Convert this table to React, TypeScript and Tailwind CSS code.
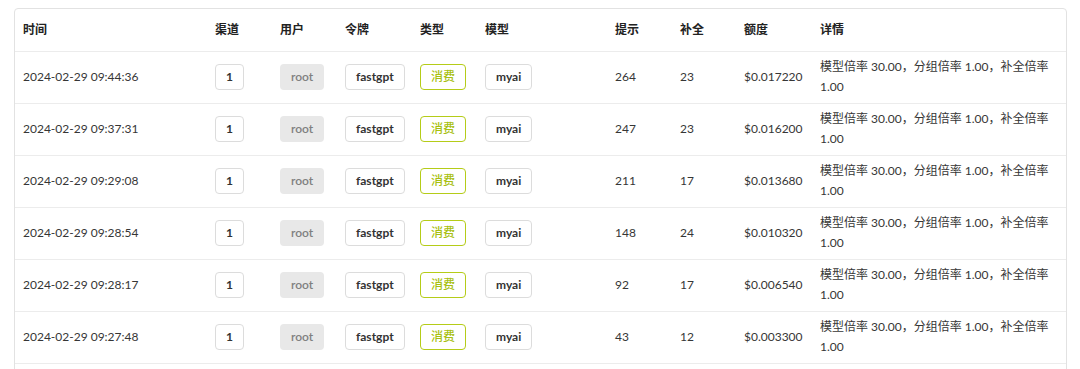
import React from "react";

interface LogRow {
  time: string;
  channel: number;
  user: string;
  token: string;
  model: string;
  prompt: number;
  completion: number;
  quota: string;
}

const rows: LogRow[] = [
  { time: "2024-02-29 09:44:36", channel: 1, user: "root", token: "fastgpt", model: "myai", prompt: 264, completion: 23, quota: "$0.017220" },
  { time: "2024-02-29 09:37:31", channel: 1, user: "root", token: "fastgpt", model: "myai", prompt: 247, completion: 23, quota: "$0.016200" },
  { time: "2024-02-29 09:29:08", channel: 1, user: "root", token: "fastgpt", model: "myai", prompt: 211, completion: 17, quota: "$0.013680" },
  { time: "2024-02-29 09:28:54", channel: 1, user: "root", token: "fastgpt", model: "myai", prompt: 148, completion: 24, quota: "$0.010320" },
  { time: "2024-02-29 09:28:17", channel: 1, user: "root", token: "fastgpt", model: "myai", prompt: 92, completion: 17, quota: "$0.006540" },
  { time: "2024-02-29 09:27:48", channel: 1, user: "root", token: "fastgpt", model: "myai", prompt: 43, completion: 12, quota: "$0.003300" },
];

const headers = ["时间", "渠道", "用户", "令牌", "类型", "模型", "提示", "补全", "额度", "详情"];
const widths = [192, 65, 65, 75, 65, 130, 65, 64, 76, 254];

// basic outlined label, like the Semantic UI "basic label"
const Tag = ({ children, className = "" }: { children: React.ReactNode; className?: string }) => (
  <span
    className={`inline-block rounded-[4px] border px-[10px] py-[5px] text-[12px] leading-[14px] ${className}`}
  >
    {children}
  </span>
);

export default function App() {
  return (
    <div className="min-h-screen bg-white pl-[14px] pt-[8px] font-['Lato','Noto_Sans_CJK_SC',sans-serif]">
      <div className="w-[1053px] overflow-hidden rounded-[4px] border border-[#e2e2e2] bg-white pb-[20px]">
        <table className="w-full table-fixed border-collapse text-left">
          <colgroup>
            {widths.map((w, i) => (
              <col key={i} style={{ width: w }} />
            ))}
          </colgroup>
          <thead>
            <tr className="h-[42px] border-b border-[#ececec]">
              {headers.map((h) => (
                <th key={h} className="pl-[8px] align-middle text-[12px] font-bold text-[#222]">
                  {h}
                </th>
              ))}
            </tr>
          </thead>
          <tbody className="text-[12px] text-[#363636]">
            {rows.map((r, i) => (
              <tr key={i} className="h-[52px] border-b border-[#ececec]">
                <td className="pl-[8px] align-middle">{r.time}</td>
                <td className="pl-[8px] align-middle">
                  <Tag className="border-[#dcdcdc] font-bold text-[#333]">{r.channel}</Tag>
                </td>
                <td className="pl-[8px] align-middle">
                  <Tag className="border-transparent bg-[#e8e8e8] font-semibold text-[#808080]">{r.user}</Tag>
                </td>
                <td className="pl-[8px] align-middle">
                  <Tag className="border-[#dcdcdc] font-bold text-[#333]">{r.token}</Tag>
                </td>
                <td className="pl-[8px] align-middle">
                  <Tag className="border-[#b5cc18] font-medium text-[#a8c010]">消费</Tag>
                </td>
                <td className="pl-[8px] align-middle">
                  <Tag className="border-[#dcdcdc] font-bold text-[#333]">{r.model}</Tag>
                </td>
                <td className="pl-[8px] align-middle">{r.prompt}</td>
                <td className="pl-[8px] align-middle">{r.completion}</td>
                <td className="pl-[8px] align-middle">{r.quota}</td>
                <td className="pl-[8px] pr-[8px] align-middle leading-[20px]">
                  模型倍率 30.00，分组倍率 1.00，补全倍率 1.00
                </td>
              </tr>
            ))}
          </tbody>
        </table>
      </div>
    </div>
  );
}
